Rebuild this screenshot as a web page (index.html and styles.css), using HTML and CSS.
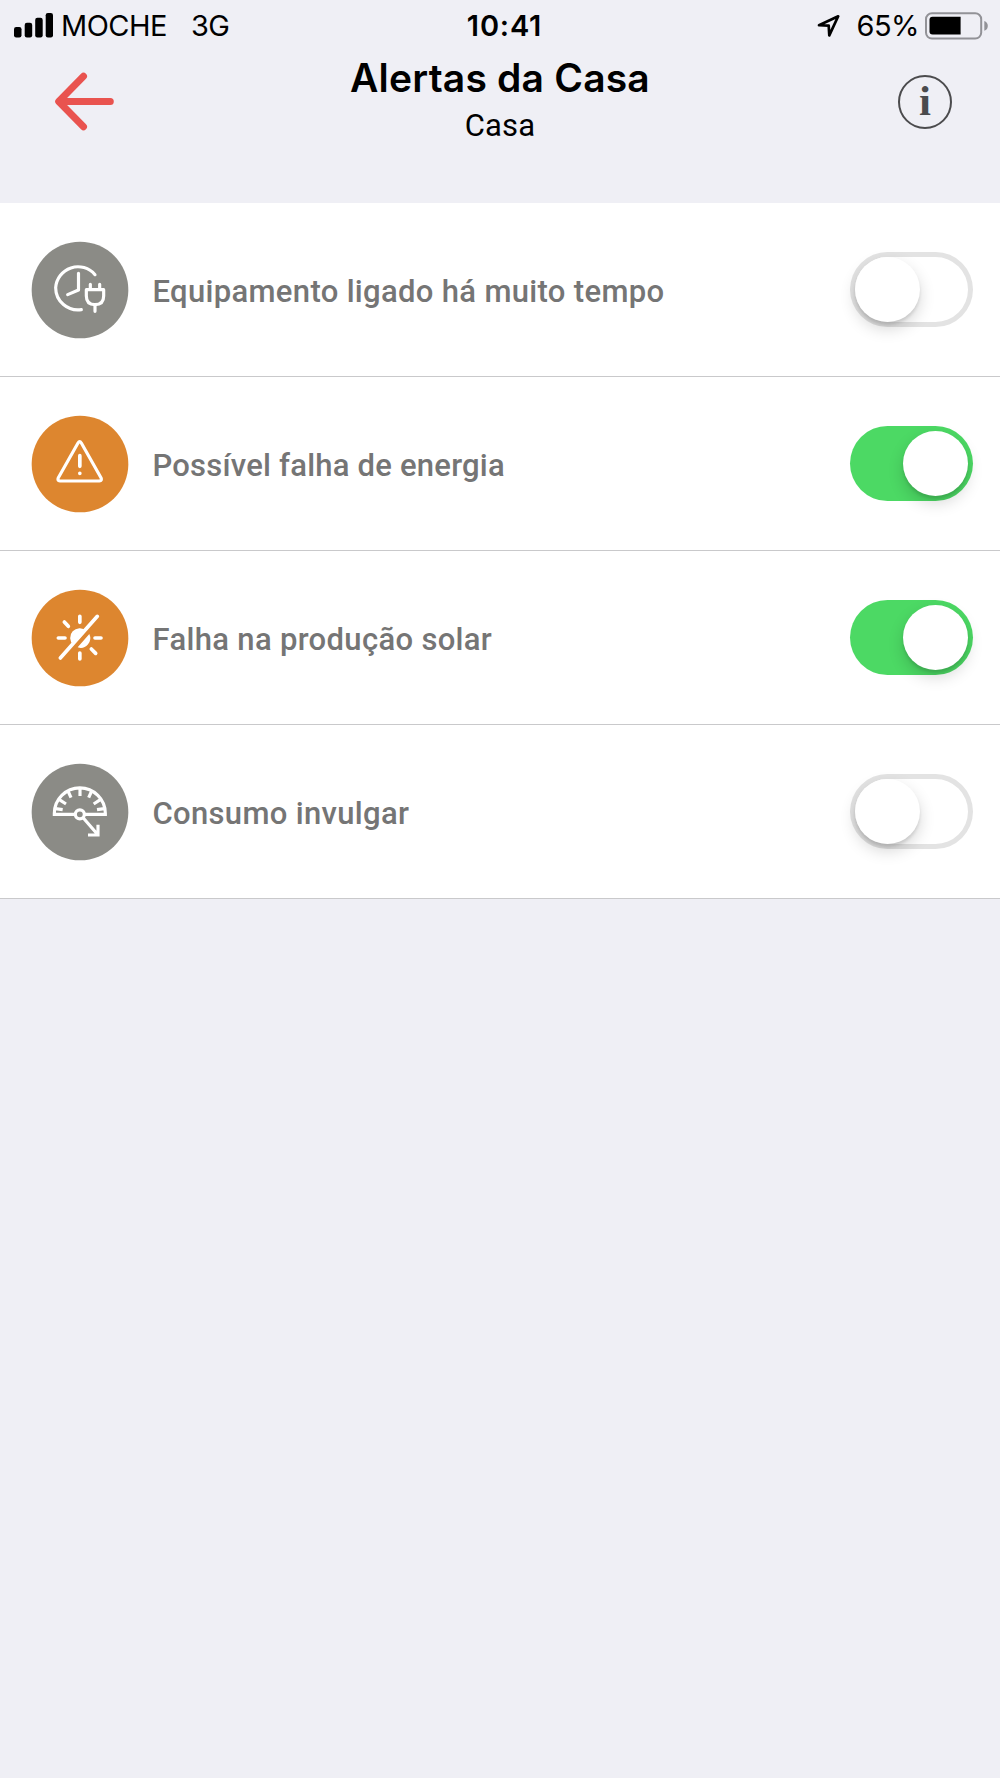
FILE: index.html
```html
<!DOCTYPE html>
<html lang="pt">
<head>
<meta charset="utf-8">
<title>Alertas da Casa</title>
<link rel="stylesheet" href="styles.css">
</head>
<body>
<div class="status">
  <div class="status-left">
    <svg class="signal" viewBox="0 0 39 25" width="39" height="25"><rect y="14" width="7.5" height="10.5" rx="2.2"/><rect x="10.7" y="9.7" width="7.5" height="14.8" rx="2.2"/><rect x="21.2" y="4.7" width="7.5" height="19.8" rx="2.2"/><rect x="31.7" width="7.3" height="24.5" rx="2.2"/></svg>
    <span class="carrier">MOCHE</span>
    <span class="network">3G</span>
  </div>
  <span class="time">10:41</span>
  <div class="status-right">
    <svg class="location" viewBox="0 0 24 24" width="24" height="24"><path d="M2 11.2 21.2 2.3 12.3 21.4 11.7 11.7Z"/></svg>
    <span class="percent">65%</span>
    <svg class="battery" viewBox="0 0 64 28" width="64" height="28"><rect class="shell" x="1" y="1.2" width="55.2" height="25.4" rx="6"/><path d="M7.5 4.7H35.6V22.6H7.5Q4.5 22.6 4.5 19.6V7.7Q4.5 4.7 7.5 4.7Z"/><path class="tip" d="M59.3 9Q62.8 10.5 62.8 13.9T59.3 18.8Z"/></svg>
  </div>
</div>
<header class="header">
  <svg class="back" viewBox="0 0 60 60" width="60" height="60"><path d="M28.5 5.3 3.7 30.5 28.5 55.8M4.5 30.5H55.3"/></svg>
  <div class="titles">
    <h1 class="title">Alertas da Casa</h1>
    <p class="subtitle">Casa</p>
  </div>
  <div class="info"><span class="info-letter">i</span></div>
</header>
<main class="list">
  <div class="row">
    <svg class="icon" viewBox="36 36 288 288"><circle class="gray" cx="180" cy="180" r="145"/><path class="line" d="M225 134A67 67 0 0 0 107 173A67 67 0 0 0 184 239M175.5 130V180L143 194M211 163V178M239 163V178M199 179H251V198Q251 224 225 224T199 198ZM225 224V244"/></svg>
    <span class="label">Equipamento ligado há muito tempo</span>
    <span class="switch"></span>
  </div>
  <div class="row">
    <svg class="icon" viewBox="36 36 288 288"><circle class="orange" cx="180" cy="180" r="145"/><path class="line" d="M174 117Q179 109 184 117L243 221Q247 230 238 231H120Q111 230 115 221Z"/><path class="line thick" d="M179.5 155V187M179.5 208V208.1"/></svg>
    <span class="label label-tight">Possível falha de energia</span>
    <span class="switch on"></span>
  </div>
  <div class="row">
    <svg class="icon" viewBox="36 36 288 288"><circle class="orange" cx="180" cy="180" r="145"/><path class="fill" d="M160 201A29 29 0 0 1 199 158ZM208 168A29 29 0 0 1 173 208Z"/><path class="line thick" d="M179.5 115V133M179.5 225V243M115 180H135M225 180H243M133 132 145 145M214 213 227 226M121 240 232 115"/></svg>
    <span class="label">Falha na produção solar</span>
    <span class="switch on"></span>
  </div>
  <div class="row">
    <svg class="icon" viewBox="36 36 288 288"><circle class="gray" cx="180" cy="180" r="145"/><path class="line gauge" d="M165 187H103V184A76.5 76.5 0 0 1 256 184V187H194M180 108V132M144 117 153 137M215 117 206 137M118 143 138 156M241 143 221 156M106 170 128 173M253 170 231 173M190 198 231 245M204 249H234V218"/><circle class="line gauge" cx="179.5" cy="187" r="13.5"/></svg>
    <span class="label">Consumo invulgar</span>
    <span class="switch"></span>
  </div>
</main>
</body>
</html>
```
FILE: styles.css
```css
* { box-sizing: border-box; }
body {
  margin: 0;
  min-height: 1778px;
  background: #efeff5;
  color: #000;
  font-family: Inter, "Liberation Sans", sans-serif;
}
.status {
  display: grid;
  grid-template-columns: 1fr auto 1fr;
  align-items: center;
  height: 50px;
  padding: 0 11px 0 14px;
  font-size: 29px;
  line-height: 50px;
}
.status-left, .status-right { display: flex; align-items: center; }
.status-left span, .status-right span, .time { padding-top: 1px; }
.signal { margin-top: -1px; }
.status-right { justify-content: flex-end; }
.carrier { margin-left: 8px; letter-spacing: -0.5px; }
.network { margin-left: 24px; letter-spacing: -0.7px; }
.time { font-weight: 600; letter-spacing: 0.8px; padding-left: 6px; }
.percent { margin: 0 6px 0 15px; letter-spacing: -0.5px; }
.location { fill: none; stroke: #000; stroke-width: 2.7; stroke-linejoin: round; }
.shell { fill: none; stroke: #929297; stroke-width: 2; }
.tip { fill: #929297; }
.header {
  display: grid;
  grid-template-columns: 60px 1fr 54px;
  align-items: start;
  height: 153px;
  padding: 0 48px 0 55px;
}
.back { margin-top: 20.5px; fill: none; stroke: #e9534f; stroke-width: 7; stroke-linecap: round; stroke-linejoin: round; }
.titles { padding-right: 13px; text-align: center; }
.title { margin: 4px 0 0; font-size: 39px; line-height: 48px; font-weight: 600; letter-spacing: 0.2px; }
.subtitle { margin: 4px 0 0; font: 31px/40px Roboto, sans-serif; letter-spacing: 0.1px; }
.info {
  display: flex;
  justify-content: center;
  width: 54px;
  height: 54px;
  margin-top: 24.5px;
  border: 2px solid #4b4b4d;
  border-radius: 50%;
  color: #4b4b4d;
  font: bold 43px/48px "Liberation Serif", serif;
}
.list { background: #fff; }
.row {
  display: flex;
  align-items: center;
  height: 174px;
  padding: 0 27px 0 32px;
  border-bottom: 1px solid #c9c9cb;
}
.icon { width: 96px; height: 96px; margin-top: 1px; flex: none; overflow: visible; }
.gray { fill: #8b8b86; }
.orange { fill: #dd862f; }
.fill { fill: #fff; }
.line { fill: none; stroke: #fff; stroke-width: 9.5; stroke-linecap: round; stroke-linejoin: round; }
.thick { stroke-width: 11; }
.gauge { stroke-linecap: butt; stroke-linejoin: miter; }
.label {
  flex: 1;
  padding: 4px 0 0 24.5px;
  color: #757575;
  font: 500 31px/40px Roboto, sans-serif;
  letter-spacing: 0.33px;
}
.label-tight { letter-spacing: 0.22px; }
.switch {
  flex: none;
  width: 123px;
  height: 75px;
  padding: 5px;
  border-radius: 38px;
  box-shadow: inset 0 0 0 5px #e3e3e3;
}
.switch::before {
  content: "";
  display: block;
  width: 65px;
  height: 65px;
  border-radius: 50%;
  background: #fff;
  box-shadow: 0 7px 16px rgba(0, 0, 0, 0.16), 0 3px 3px rgba(0, 0, 0, 0.1);
}
.on { background: #4cd964; box-shadow: none; }
.on::before { margin-left: 48px; }
```
